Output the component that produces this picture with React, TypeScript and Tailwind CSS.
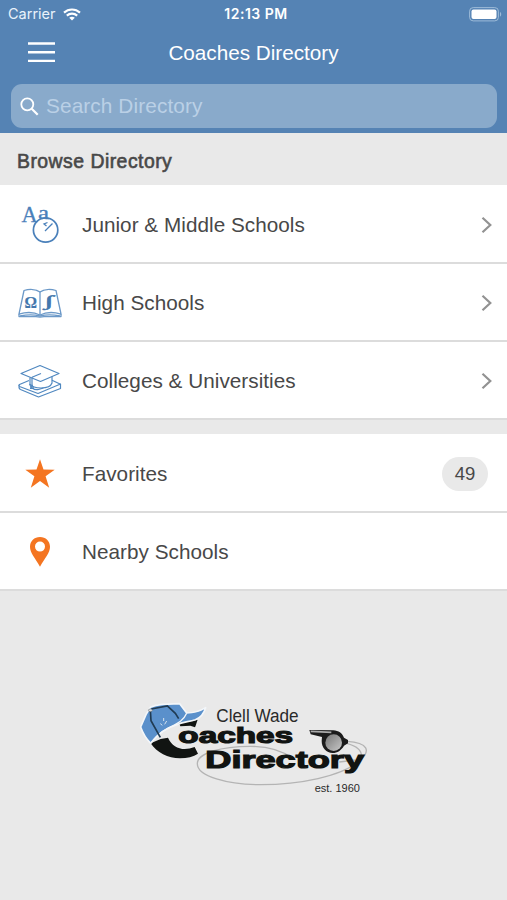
import type { ReactNode } from "react";

function WifiIcon() {
  return (
    <svg width="18" height="13" viewBox="0 0 18 13" fill="none" stroke="#fff" strokeWidth="2.1">
      <path d="M1 4.6C5.6.4 12.4.4 17 4.6" />
      <path d="M3.8 7.6c3-2.7 7.4-2.7 10.4 0" />
      <path d="M6.2 9.7c1.7-1.4 3.9-1.4 5.6 0L9 12.5z" fill="#fff" stroke="none" />
    </svg>
  );
}

function BatteryIcon() {
  return (
    <svg width="33" height="15" viewBox="0 0 33 15">
      <rect x="0.6" y="0.6" width="28.8" height="13.3" rx="3.6" fill="none" stroke="#9dbbd8" strokeWidth="1" />
      <rect x="2.5" y="2.5" width="25" height="9.5" rx="2" fill="#fff" />
      <path d="M31 5c1.6.6 1.6 4 0 4.600z" fill="#9dbbd8" />
    </svg>
  );
}

function JuniorIcon() {
  return (
    <svg width="44" height="44" viewBox="18 203 44 44">
      <g fill="#4a80ba" stroke="#4a80ba" strokeWidth="0.3" fontFamily="'Liberation Serif', serif">
        <text x="21.5" y="222" fontSize="24" textLength="16" lengthAdjust="spacingAndGlyphs">A</text>
        <text x="38" y="218.5" fontSize="18" textLength="11" lengthAdjust="spacingAndGlyphs">a</text>
      </g>
      <circle cx="45.6" cy="230" r="12.2" fill="none" stroke="#4a80ba" strokeWidth="1.7" />
      <path d="M45 231l7.5-7.5M47.500 222.500l-3.500 1.500 2.500 2" fill="none" stroke="#4a80ba" strokeWidth="1.3" />
    </svg>
  );
}

function HighIcon() {
  return (
    <svg width="44" height="30" viewBox="18 288 44 30">
      <g fill="none" stroke="#6c99c8" strokeWidth="1.3" strokeLinejoin="round">
        <path d="M40 292c-4-3-11-3-16-1.500L19 314c7-2 15-2 21 1 6-3 14-3 21-1l-5-23.500c-5-1.500-12-1.500-16 1.500z" />
        <path d="M40 292v23M19 314v2.600h17l4 .6 4-.6h17V314" />
        <path d="M20 316c7-1.500 14-1.500 20 0 6-1.500 13-1.500 20 0" />
      </g>
      <g fill="#4377ad" stroke="#4377ad" fontFamily="'Liberation Serif', serif">
        <text x="24.5" y="307.5" fontSize="17" fontWeight="bold" strokeWidth="0.2" textLength="12.5" lengthAdjust="spacingAndGlyphs">Ω</text>
        <text x="44" y="306" fontSize="15" strokeWidth="0.5" textLength="9" lengthAdjust="spacingAndGlyphs">∫</text>
      </g>
    </svg>
  );
}

function CollegeIcon() {
  return (
    <svg width="44" height="36" viewBox="18 363 44 36" fill="none" stroke="#5088c0" strokeWidth="1.2" strokeLinejoin="round">
      <path d="M21 373.500l19-8 19 8-18.500 8z" />
      <path d="M41 373.500l-9 3.800M32 377.300v7M32 384.500l-1.500 4h3z" />
      <path d="M30 377.500v6.500c2 3 6 4 11 4 6 0 10-2 11-5v-6.500" />
      <path d="M29 380.500l-9.500 4c-1 .6-1 1.400 0 2l18.500 7 22.500-9.500v4.500L38.500 397l-18-7.500c-1.500-.7-2-2.500-1-4.500M52 380.200l8.500 4" />
      <path d="M29.500 384c2 5 5 6.200 9 5.500l5-1.500" />
    </svg>
  );
}

function StarIcon() {
  return (
    <svg width="30" height="30" viewBox="0 0 30 30">
      <path d="M15 .2l3.500 10.400 11.200.1-9.100 6.600 3.600 11.500-9.200-6.800-9.200 6.800 3.600-11.500L.3 10.700l11.200-.1z" fill="#f47521" />
    </svg>
  );
}

function PinIcon() {
  return (
    <svg width="20" height="30" viewBox="0 0 20 30">
      <path fillRule="evenodd" d="M10 0C4.300 0 0 4.200 0 9.700 0 16 5 20.500 10 29.800 15 20.500 20 16 20 9.700 20 4.200 15.700 0 10 0zm0 4.600a5 5 0 1 1 0 10 5 5 0 0 1 0-10z" fill="#f47521" />
    </svg>
  );
}

function Logo() {
  return (
    <svg width="236" height="102" viewBox="0 0 708 306" className="block">
      <defs>
        <linearGradient id="whistle" x1="0" y1="0" x2="1" y2="1">
          <stop offset="0" stopColor="#777" />
          <stop offset="1" stopColor="#c8c8c8" />
        </linearGradient>
      </defs>

      {/* whistle cord */}
      <g fill="none" stroke="#b4b4b4" strokeWidth="4">
        <path d="M468 180c-30-22-75-35-126-35-85 0-158 20-158 52 0 38 90 63 190 63 120 0 240-25 295-70 38-32 27-56-36-60" />
        <path d="M632 136c30 8 45 22 44 38M610 192l48-6" />
      </g>

      {/* big C behind the cap */}
      <path d="M44 136c18 27 52 45 88 45 22 0 40-5 54-14l-10-20c-34 13-65 5-80-28l-22 4z" fill="#111412" />
      <path d="M130 77c18-8 36-7 55-12-3 7-4 14-8 23l-14-5-30 2z" fill="#111412" />

      {/* cap */}
      <path
        d="M14 87L30 50l13-22c12-6 22-8 36-9l52-2 21 28c20 0 38-4 57-16-5 17-16 30-31 36-20 7-35 6-58 16-31 9-54 25-76 55-13-13-24-32-30-49z"
        fill="#5a90cb"
        stroke="#f3f6f9"
        strokeWidth="5"
        strokeLinejoin="round"
      />
      <path d="M152 46c-10 24-32 32-58 46-20 11-36 25-50 44" fill="none" stroke="#f3f6f9" strokeWidth="4" />
      <path d="M43 36l2 32 28 50M46 33l48-9 24 22 10 16" fill="none" stroke="#203b53" strokeWidth="5" />
      <ellipse cx="43" cy="37" rx="6" ry="4" fill="#ddd" stroke="#59636b" strokeWidth="1.5" />
      <path d="M83 60v9M73 77l6 5M92 69l-6 10" stroke="#d6e3ef" strokeWidth="3" />

      <g fill="#111412" stroke="#111412" strokeWidth="3.6" fontFamily="'Liberation Sans', sans-serif" fontWeight="bold">
        <text x="127" y="134.5" fontSize="66" textLength="344" lengthAdjust="spacingAndGlyphs">oaches</text>
        <text x="208" y="209.5" fontSize="73" textLength="476" lengthAdjust="spacingAndGlyphs">Directory</text>
      </g>
      <g fill="#2a2a2a" fontFamily="'Liberation Sans', sans-serif">
        <text x="241" y="73" fontSize="53" textLength="247" lengthAdjust="spacingAndGlyphs">Clell Wade</text>
        <text x="536" y="282" fontSize="31" textLength="136" lengthAdjust="spacingAndGlyphs">est. 1960</text>
      </g>

      {/* whistle */}
      <path d="M520 96l72 1c16 1 26 8 32 22l12 7v10l-12 7c-8 14-20 22-34 22-19 0-33-16-33-36 0-5 1-9 1-12l-34-8z" fill="#1b1b1b" />
      <path d="M524 100l62 3" fill="none" stroke="#aaa" strokeWidth="5" />
      <circle cx="593" cy="134" r="25" fill="url(#whistle)" />
    </svg>
  );
}

function Row({ icon, label, arrow, count }: { icon: ReactNode; label: string; arrow?: boolean; count?: number }) {
  return (
    <div className="h-[78px] bg-white border-b-2 border-[#dcdcdc] flex items-center pt-[2px] pr-[14px]">
      <div className="w-20 flex justify-center shrink-0">{icon}</div>
      <span className="pl-[2px] flex-1 text-[20.7px] leading-6 tracking-[0.04px] text-[#484848]">{label}</span>
      {arrow && (
        <svg width="12" height="18" viewBox="0 0 12 18" fill="none" stroke="#929292" strokeWidth="2.2">
          <path d="M1.500 1.800L9.300 9l-7.800 7.200" />
        </svg>
      )}
      {count !== undefined && (
        <span className="mr-[5px] w-[46px] h-[34px] rounded-full bg-[#e9e9e9] flex items-center justify-center text-[18.5px] text-[#484848]">
          {count}
        </span>
      )}
    </div>
  );
}

export default function App() {
  return (
    <div className="w-[507px] h-[900px] bg-[#e9e9e9] flex flex-col overflow-hidden font-['Liberation_Sans',Arial,sans-serif]">
      <header className="h-[133px] shrink-0 bg-[#5583b4] text-white">
        <div className="h-7 grid grid-cols-3 items-center pl-2 pr-[5px] font-[Inter,sans-serif]">
          <div className="flex items-center gap-[7px]">
            <span className="text-[14.5px] leading-5 text-[#e9f2fb]">Carrier</span>
            <WifiIcon />
          </div>
          <span className="pl-[2px] text-center text-[14px] leading-5 font-semibold tracking-[0.5px]">12:13 PM</span>
          <div className="flex justify-end">
            <BatteryIcon />
          </div>
        </div>

        <div className="h-14 grid grid-cols-[84px_1fr_84px] items-center">
          <svg width="27" height="22" viewBox="0 0 27 22" className="ml-7 mb-2" stroke="#fff" strokeWidth="2.4">
            <path d="M0 2.500h27M0 11.200h27M0 19.900h27" />
          </svg>
          <h1 className="text-center text-[20.7px] leading-6 pb-[6px]">Coaches Directory</h1>
        </div>

        <div className="ml-[11px] mr-[10px] h-11 rounded-[11px] bg-[#89aacb] flex items-center pl-[9px] gap-[7px]">
          <svg width="19" height="19" viewBox="0 0 19 19" fill="none" stroke="#fff" strokeWidth="1.8">
            <circle cx="7.300" cy="7.300" r="6" />
            <path d="M11.700 11.700l6 6" strokeWidth="2.2" />
          </svg>
          <span className="text-[20.8px] leading-6 tracking-[0.1px] text-[#bad0e6]">Search Directory</span>
        </div>
      </header>

      <h2 className="h-[52px] shrink-0 pl-[17px] pt-[5px] flex items-center text-[19.4px] tracking-[0.48px] text-[#484848] [-webkit-text-stroke:0.6px_#484848]">
        Browse Directory
      </h2>

      <div className="shrink-0 mb-[14px] pt-px bg-white">
        <Row icon={<JuniorIcon />} label="Junior & Middle Schools" arrow />
        <Row icon={<HighIcon />} label="High Schools" arrow />
        <Row icon={<CollegeIcon />} label="Colleges & Universities" arrow />
      </div>

      <div className="shrink-0 pt-px bg-white">
        <Row icon={<StarIcon />} label="Favorites" count={49} />
        <Row icon={<PinIcon />} label="Nearby Schools" />
      </div>

      <footer className="flex-1 flex justify-center pt-[107px] pl-px">
        <Logo />
      </footer>
    </div>
  );
}
